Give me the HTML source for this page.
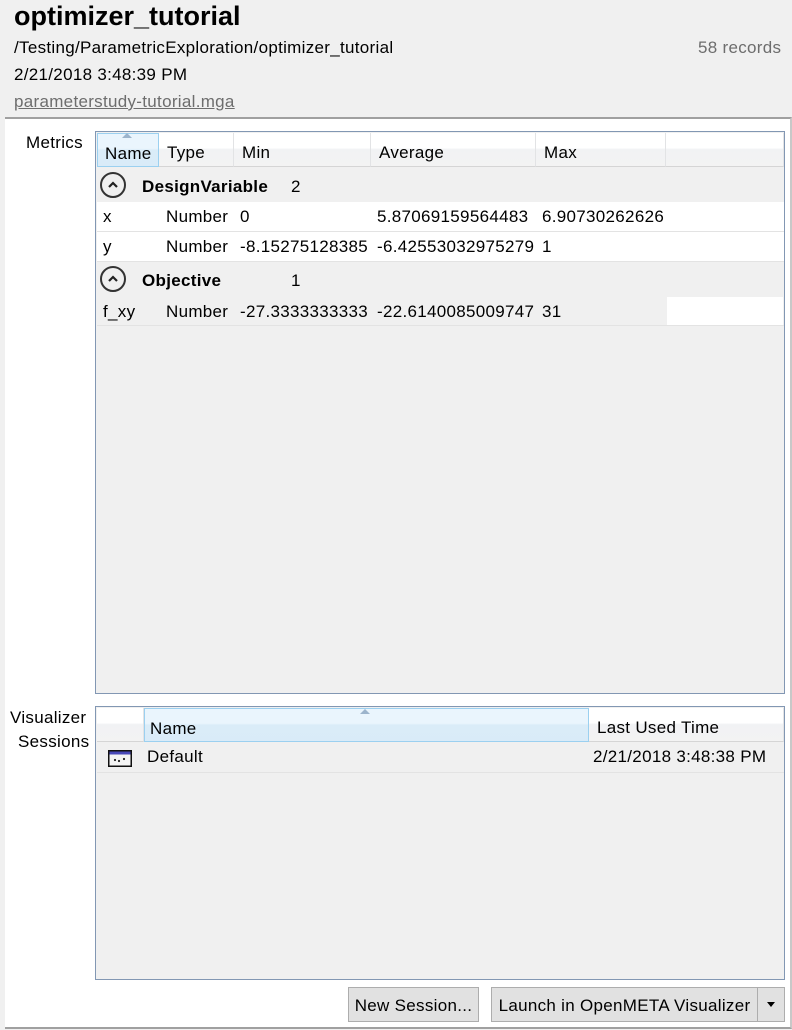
<!DOCTYPE html>
<html><head><style>
*{margin:0;padding:0;box-sizing:border-box}
body{width:792px;height:1030px;background:#f0f0f0;font-family:"Liberation Sans",sans-serif;font-size:17px;letter-spacing:0.3px;color:#000;position:relative;overflow:hidden}
.a{position:absolute;white-space:nowrap}
.grid{position:absolute;border:1px solid #8297b3;background:#f0f0f0}
.hd{position:absolute;top:1px;height:34px;background:linear-gradient(#fff 0%,#fff 45%,#f1f2f4 50%,#f3f3f3 100%);border-right:1px solid #e2e3e5;border-bottom:1px solid #d5d5d5;padding:10px 0 0 8px}
.sel{background:linear-gradient(#eaf5fd 0%,#eaf5fd 45%,#daecf8 50%,#d9ebf8 100%);border:1px solid #9bd0f0}
.row{position:absolute;left:1px;height:30px;border-bottom:1px solid #e3e3e3}
.btn{position:absolute;background:#e1e1e1;border:1px solid #adadad;text-align:center;padding-top:8px;font-size:17px}
.circ{position:absolute;width:26px;height:26px;border:2px solid #333;border-radius:50%}
</style></head><body>
<div class="a" style="left:14px;top:1px;font-size:27px;font-weight:bold;letter-spacing:0">optimizer_tutorial</div>
<div class="a" style="left:14px;top:38px">/Testing/ParametricExploration/optimizer_tutorial</div>
<div class="a" style="left:698px;top:38px;color:#6d6d6d">58 records</div>
<div class="a" style="left:14px;top:65px">2/21/2018 3:48:39 PM</div>
<div class="a" style="left:14px;top:92px;color:#6d6d6d;text-decoration:underline">parameterstudy-tutorial.mga</div>

<div class="a" style="left:5px;top:117px;width:787px;height:912px;background:#fff;border-top:2px solid #a0a0a0;border-right:2px solid #c8c8c8;border-bottom:2px solid #a0a0a0"></div>

<div class="a" style="left:26px;top:133px">Metrics</div>
<div class="grid" style="left:95px;top:131px;width:690px;height:563px">
 <div class="hd sel" style="left:1px;width:62px;padding-left:7px">Name<div class="a" style="left:24px;top:-1px;width:0;height:0;border-left:5px solid transparent;border-right:5px solid transparent;border-bottom:5px solid #9cb4cc"></div></div>
 <div class="hd" style="left:63px;width:75px">Type</div>
 <div class="hd" style="left:138px;width:137px">Min</div>
 <div class="hd" style="left:275px;width:165px">Average</div>
 <div class="hd" style="left:440px;width:130px">Max</div>
 <div class="hd" style="left:570px;width:118px"></div>
 <div class="row" style="top:36px;width:687px;height:34px;background:#f0f0f0;border:none"></div>
 <div class="circ" style="left:4px;top:40px"></div>
 <svg class="a" style="left:11px;top:49px" width="12" height="8"><path d="M2 6 L6 2 L10 6" stroke="#222" stroke-width="2.2" fill="none"/></svg>
 <div class="a" style="left:46px;top:45px;font-weight:bold">DesignVariable</div>
 <div class="a" style="left:195px;top:45px">2</div>
 <div class="row" style="top:70px;width:687px;background:#fff"></div>
 <div class="a" style="left:7px;top:75px">x</div><div class="a" style="left:70px;top:75px">Number</div><div class="a" style="left:144px;top:75px">0</div><div class="a" style="left:281px;top:75px">5.87069159564483</div><div class="a" style="left:446px;top:75px">6.90730262626</div>
 <div class="row" style="top:100px;width:687px;background:#fff"></div>
 <div class="a" style="left:7px;top:105px">y</div><div class="a" style="left:70px;top:105px">Number</div><div class="a" style="left:144px;top:105px">-8.15275128385</div><div class="a" style="left:281px;top:105px">-6.42553032975279</div><div class="a" style="left:446px;top:105px">1</div>
 <div class="circ" style="left:4px;top:134px"></div>
 <svg class="a" style="left:11px;top:143px" width="12" height="8"><path d="M2 6 L6 2 L10 6" stroke="#222" stroke-width="2.2" fill="none"/></svg>
 <div class="a" style="left:46px;top:139px;font-weight:bold">Objective</div>
 <div class="a" style="left:195px;top:139px">1</div>
 <div class="row" style="top:164px;width:687px;background:#f0f0f0"></div>
 <div class="a" style="left:571px;top:165px;width:116px;height:28px;background:#fff"></div>
 <div class="a" style="left:7px;top:170px">f_xy</div><div class="a" style="left:70px;top:170px">Number</div><div class="a" style="left:144px;top:170px">-27.3333333333</div><div class="a" style="left:281px;top:170px">-22.6140085009747</div><div class="a" style="left:446px;top:170px">31</div>
</div>

<div class="a" style="left:10px;top:708px">Visualizer</div>
<div class="a" style="left:18px;top:732px">Sessions</div>
<div class="grid" style="left:95px;top:706px;width:690px;height:274px">
 <div class="hd" style="left:1px;width:47px"></div>
 <div class="hd sel" style="left:48px;width:445px;padding-top:10px;padding-left:5px">Name<div class="a" style="left:215px;top:0px;width:0;height:0;border-left:5px solid transparent;border-right:5px solid transparent;border-bottom:5px solid #9cb4cc"></div></div>
 <div class="hd" style="left:493px;width:195px;padding-top:10px">Last Used Time</div>
 <div class="row" style="top:36px;width:687px"></div>
 <svg class="a" style="left:12px;top:43px" width="24" height="17"><rect x="0.75" y="0.75" width="22.5" height="15.5" fill="#f4f4f4" stroke="#111" stroke-width="1.5"/><rect x="1.5" y="1.5" width="21" height="3" fill="#4848b8"/><circle cx="7" cy="10" r="1.1" fill="#222"/><circle cx="11" cy="11" r="1.1" fill="#222"/><circle cx="16" cy="9" r="1.1" fill="#222"/></svg>
 <div class="a" style="left:51px;top:40px">Default</div>
 <div class="a" style="left:497px;top:40px">2/21/2018 3:48:38 PM</div>
</div>

<div class="btn" style="left:348px;top:987px;width:131px;height:35px">New Session...</div>
<div class="btn" style="left:491px;top:987px;width:267px;height:35px">Launch in OpenMETA Visualizer</div>
<div class="btn" style="left:757px;top:987px;width:28px;height:35px"><div style="margin:6px auto 0;width:0;height:0;border-left:4px solid transparent;border-right:4px solid transparent;border-top:5px solid #000"></div></div>
</body></html>
